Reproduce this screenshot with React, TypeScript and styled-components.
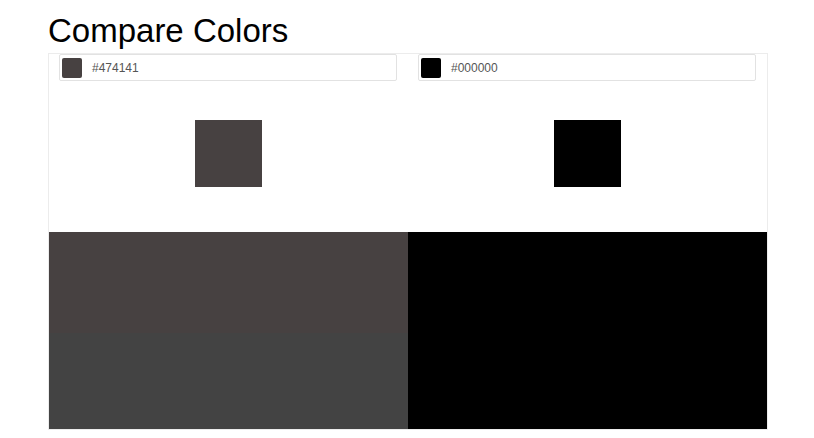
import React from "react";
import styled, { createGlobalStyle } from "styled-components";

const GlobalStyle = createGlobalStyle`
  html, body {
    margin: 0;
    padding: 0;
    background: #fff;
  }
  body {
    font-family: "Liberation Sans", Arial, sans-serif;
    color: #000;
  }
`;

const Page = styled.div`
  padding: 12px 0 0 48px;
`;

const Title = styled.h1`
  margin: 0 0 4px;
  font-size: 33px;
  font-weight: 400;
  line-height: 37px;
  letter-spacing: 0;
`;

const Board = styled.div`
  width: 720px;
  box-sizing: border-box;
  border: 1px solid #ececec;
  display: grid;
  grid-template-columns: 1fr 1fr;
`;

const Column = styled.div`
  display: flex;
  flex-direction: column;
`;

const Field = styled.label`
  margin: 0 11px 0 10px;
  height: 27px;
  box-sizing: border-box;
  border: 1px solid #e2e2e2;
  border-radius: 2px;
  display: flex;
  align-items: center;
  gap: 10px;
  padding: 0 2px;
`;

const Chip = styled.span<{ $color: string }>`
  width: 20px;
  height: 20px;
  border-radius: 2px;
  background: ${(p) => p.$color};
  flex-shrink: 0;
`;

const Hex = styled.span`
  font-size: 12px;
  color: #555;
`;

const Preview = styled.div`
  height: 151px;
  display: flex;
  justify-content: center;
  padding-top: 39px;
  box-sizing: border-box;
`;

const Square = styled.div<{ $color: string }>`
  width: 67px;
  height: 67px;
  background: ${(p) => p.$color};
`;

const Panel = styled.div`
  height: 197px;
  display: flex;
  flex-direction: column;
`;

const Band = styled.div<{ $color: string; $size: number }>`
  flex: ${(p) => p.$size};
  background: ${(p) => p.$color};
`;

type Swatch = { hex: string; bands: [string, number][] };

const swatches: Swatch[] = [
  { hex: "#474141", bands: [["#474141", 101], ["#434343", 96]] },
  { hex: "#000000", bands: [["#000000", 1]] },
];

export default function App() {
  return (
    <Page>
      <GlobalStyle />
      <Title>Compare Colors</Title>
      <Board>
        {swatches.map((s) => (
          <Column key={s.hex}>
            <Field>
              <Chip $color={s.hex} />
              <Hex>{s.hex}</Hex>
            </Field>
            <Preview>
              <Square $color={s.hex} />
            </Preview>
            <Panel>
              {s.bands.map(([c, n], i) => (
                <Band key={i} $color={c} $size={n} />
              ))}
            </Panel>
          </Column>
        ))}
      </Board>
    </Page>
  );
}
